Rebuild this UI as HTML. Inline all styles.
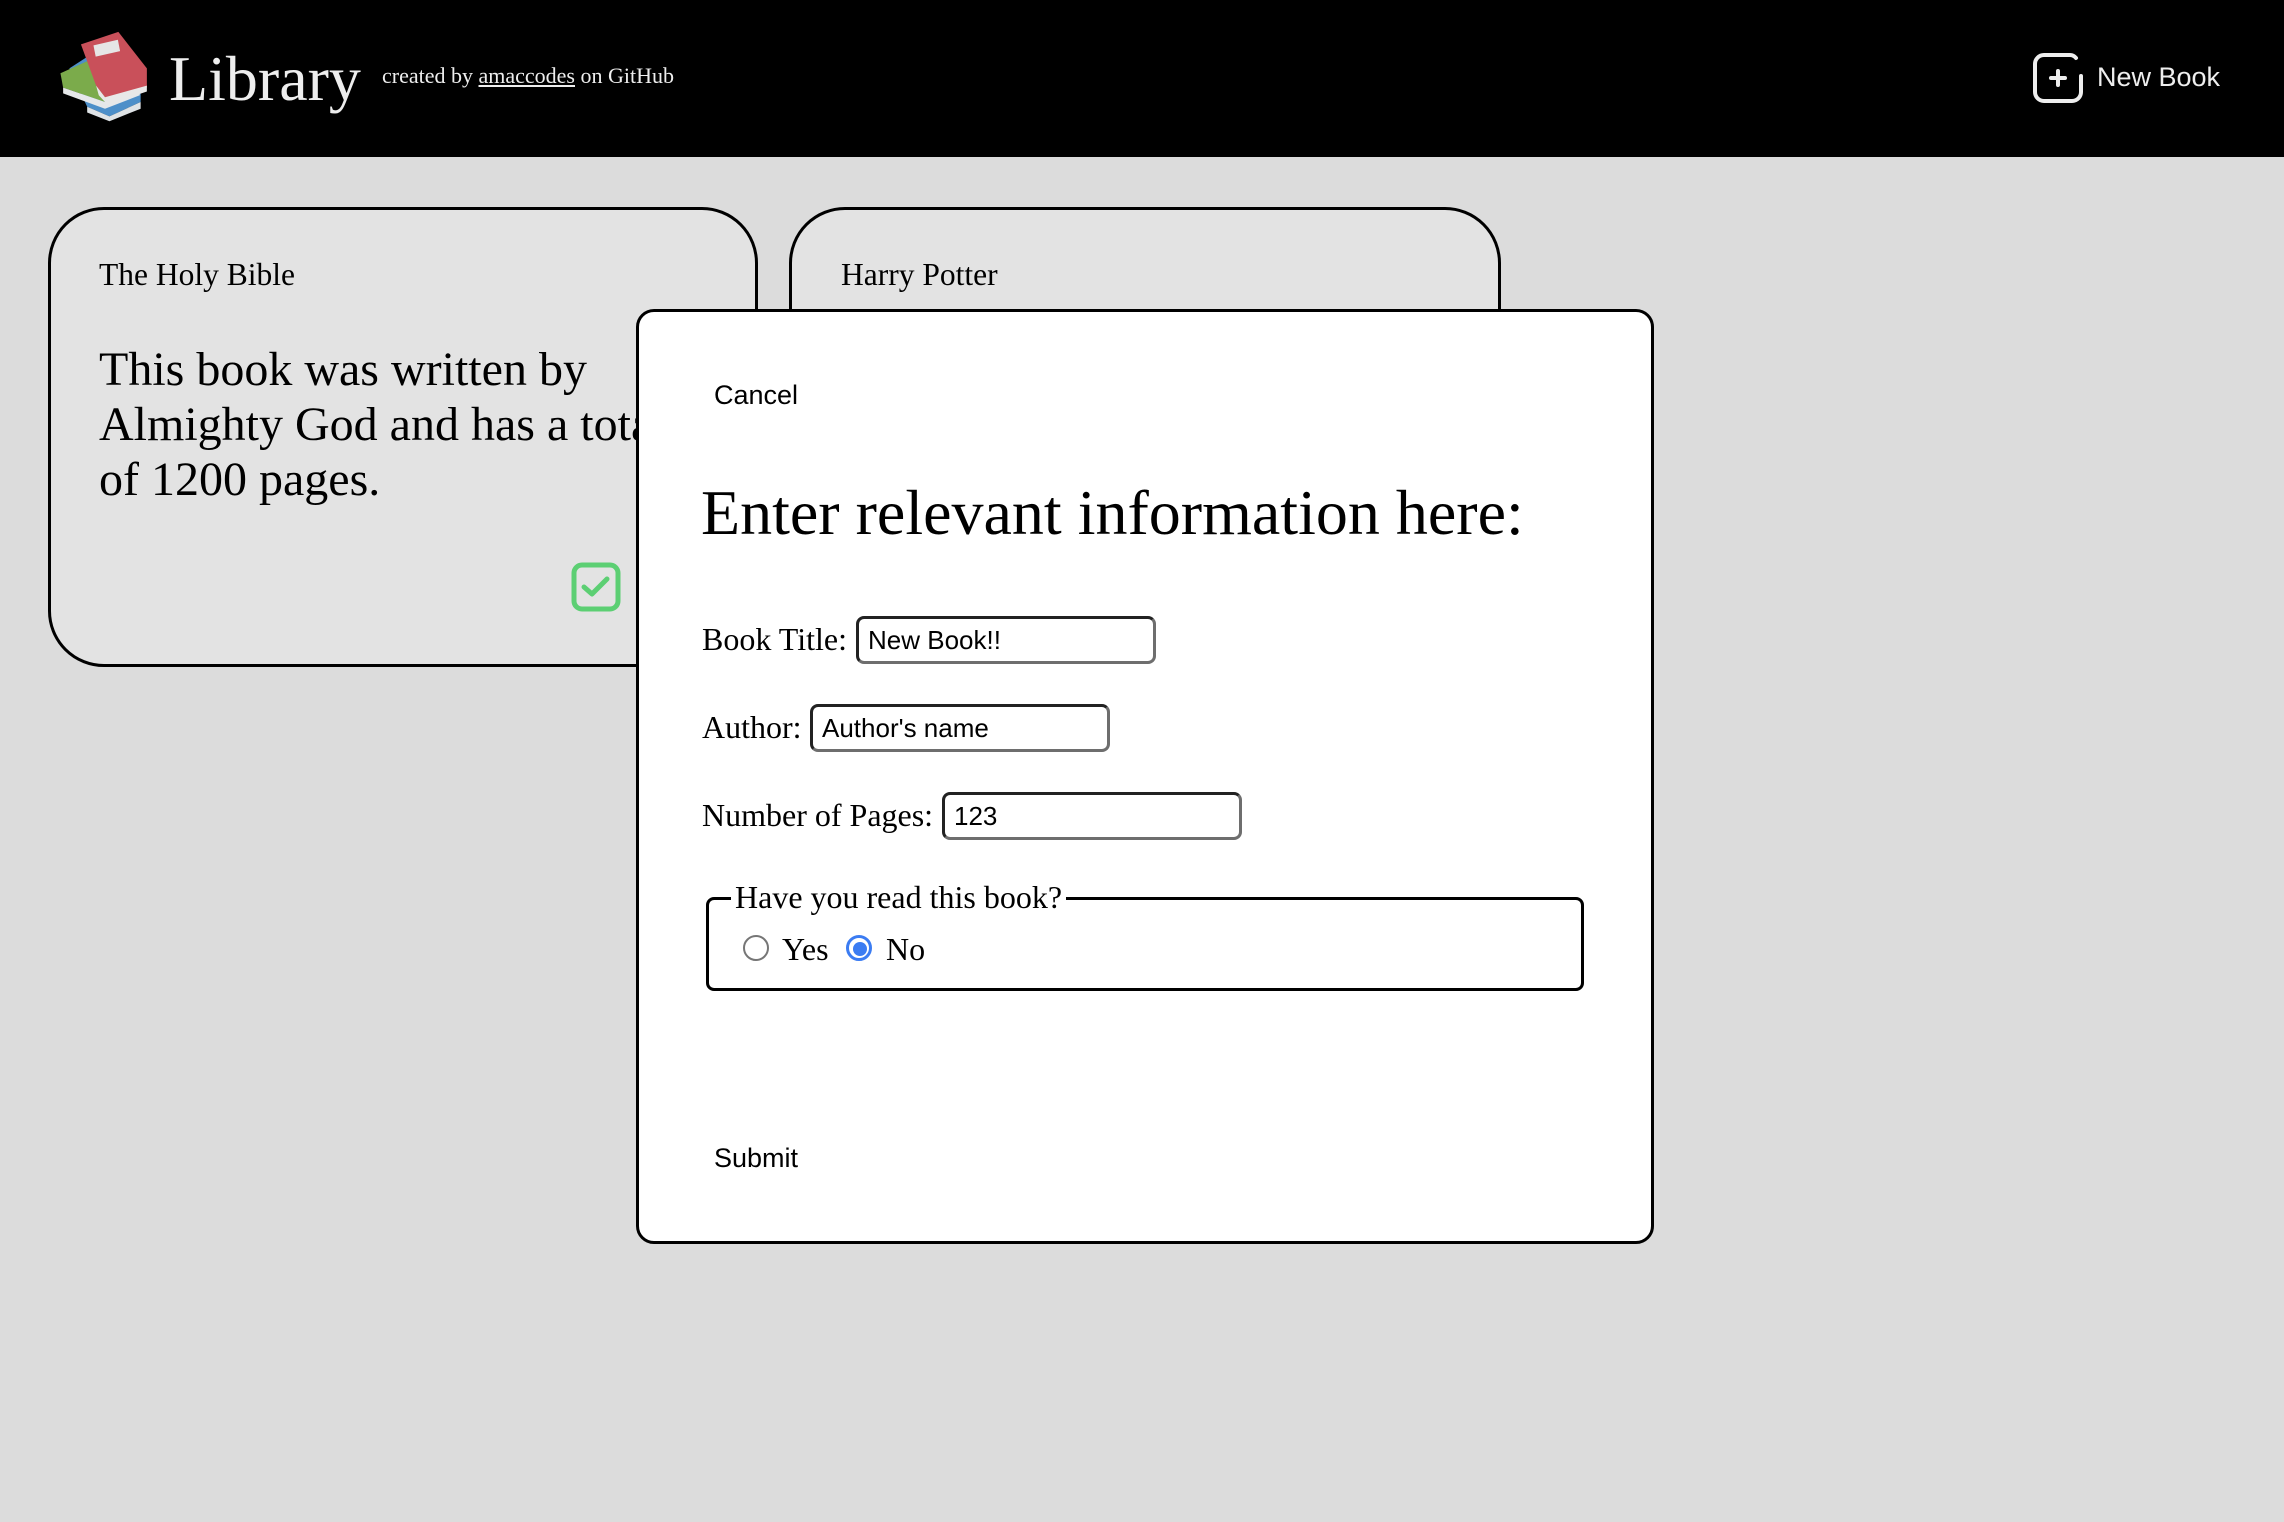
<!DOCTYPE html>
<html><head><meta charset="utf-8"><style>
*{box-sizing:border-box;margin:0;padding:0}
html,body{width:2284px;height:1522px;overflow:hidden;background:#dcdcdc;font-family:"Liberation Serif",serif;position:relative}
.a{position:absolute;white-space:nowrap}
.hdr{position:absolute;left:0;top:0;width:2284px;height:157px;background:#000}
.card{position:absolute;top:207px;height:460px;background:#e3e3e3;border:3px solid #000;border-radius:56px}
.sans{font-family:"Liberation Sans",sans-serif}
.inp{position:absolute;height:48px;border:3px solid #222;border-bottom-color:#6e6e6e;border-right-color:#6e6e6e;border-radius:8px;background:#fff;font-family:"Liberation Sans",sans-serif;font-size:26px;padding-left:9px;line-height:42px;color:#000}
.lbl{position:absolute;font-size:32px;line-height:30px}
</style></head><body>
<div class="hdr"></div>
<svg class="a" style="left:56px;top:30px" width="98" height="96" viewBox="0 0 110 100" preserveAspectRatio="none">
<path d="M15 40 L40 25 L75 55 L95 50 L95 75 L60 90 L35 80 Z" fill="#4d8fc9"/>
<path d="M35 80 L60 90 L95 75 L95 82 L60 95 L35 86 Z" fill="#dfe3e6"/>
<path d="M5 45 L60 22 L92 30 L94 60 L55 75 L8 60 Z" fill="#7bab4b"/>
<path d="M8 60 L55 75 L94 60 L94 68 L55 82 L8 66 Z" fill="#e6e8ea"/>
<path d="M28 15 L70 2 L102 40 L102 60 L55 70 L45 58 Z" fill="#c9505a"/>
<path d="M45 58 L55 70 L102 58 L102 64 L58 78 L48 68 Z" fill="#e8e8e8"/>
<rect x="43" y="13" width="28" height="12" fill="#e6e6e6" transform="rotate(-12 57 19)"/>
</svg>
<div class="a" style="left:169px;top:39px;font-size:64px;color:#eee;line-height:80px">Library</div>
<div class="a" style="left:382px;top:63px;font-size:22px;color:#eee">created by <u>amaccodes</u> on GitHub</div>
<svg class="a" style="left:2032px;top:52px" width="52" height="52" viewBox="0 0 52 52"><path d="M44 6 A8 8 0 0 0 38 3 H12 A9 9 0 0 0 3 12 V40 A9 9 0 0 0 12 49 H40 A9 9 0 0 0 49 40 V24" fill="none" stroke="#eee" stroke-width="4" stroke-linecap="round"/><path d="M26 19 V33 M19 26 H33" stroke="#eee" stroke-width="4" stroke-linecap="round"/></svg>
<div class="a sans" style="left:2097px;top:62px;font-size:27px;color:#eee">New Book</div>

<div class="card" style="left:48px;width:710px"></div>
<div class="card" style="left:789px;width:712px"></div>
<div class="a" style="left:99px;top:257px;font-size:31.5px">The Holy Bible</div>
<div class="a" style="left:841px;top:257px;font-size:31.5px">Harry Potter</div>
<div class="a" style="left:99px;top:342px;font-size:48px;line-height:55px">This book was written by<br>Almighty God and has a total<br>of 1200 pages.</div>
<svg class="a" style="left:571px;top:562px" width="50" height="50" viewBox="0 0 50 50"><rect x="3" y="3" width="44" height="44" rx="8" fill="none" stroke="#5ccf73" stroke-width="5"/><path d="M13 25 L21 32 L36 17" fill="none" stroke="#5ccf73" stroke-width="5" stroke-linecap="round" stroke-linejoin="round"/></svg>

<div class="a" style="left:636px;top:309px;width:1018px;height:935px;background:#fff;border:3px solid #000;border-radius:18px"></div>
<div class="a sans" style="left:714px;top:380px;font-size:27px">Cancel</div>
<div class="a" style="left:701px;top:477px;font-size:64px;line-height:72px">Enter relevant information here:</div>
<div class="lbl" style="left:702px;top:624px">Book Title:</div>
<div class="inp" style="left:856px;top:616px;width:300px">New Book!!</div>
<div class="lbl" style="left:702px;top:712px">Author:</div>
<div class="inp" style="left:810px;top:704px;width:300px">Author's name</div>
<div class="lbl" style="left:702px;top:800px">Number of Pages:</div>
<div class="inp" style="left:942px;top:792px;width:300px">123</div>
<div class="a" style="left:706px;top:897px;width:878px;height:94px;border:3px solid #000;border-radius:8px"></div>
<div class="a" style="left:731px;top:879px;font-size:32px;background:#fff;padding:0 4px;line-height:36px">Have you read this book?</div>
<div class="a" style="left:743px;top:935px;width:26px;height:26px;border:2px solid #767676;border-radius:50%;background:#fff"></div>
<div class="a" style="left:782px;top:931px;font-size:32px">Yes</div>
<div class="a" style="left:846px;top:935px;width:26px;height:26px;border:3px solid #3b7cf2;border-radius:50%;background:#fff"><div style="margin:4px;width:14px;height:14px;border-radius:50%;background:#3b7cf2"></div></div>
<div class="a" style="left:886px;top:931px;font-size:32px">No</div>
<div class="a sans" style="left:714px;top:1143px;font-size:27px">Submit</div>
</body></html>
